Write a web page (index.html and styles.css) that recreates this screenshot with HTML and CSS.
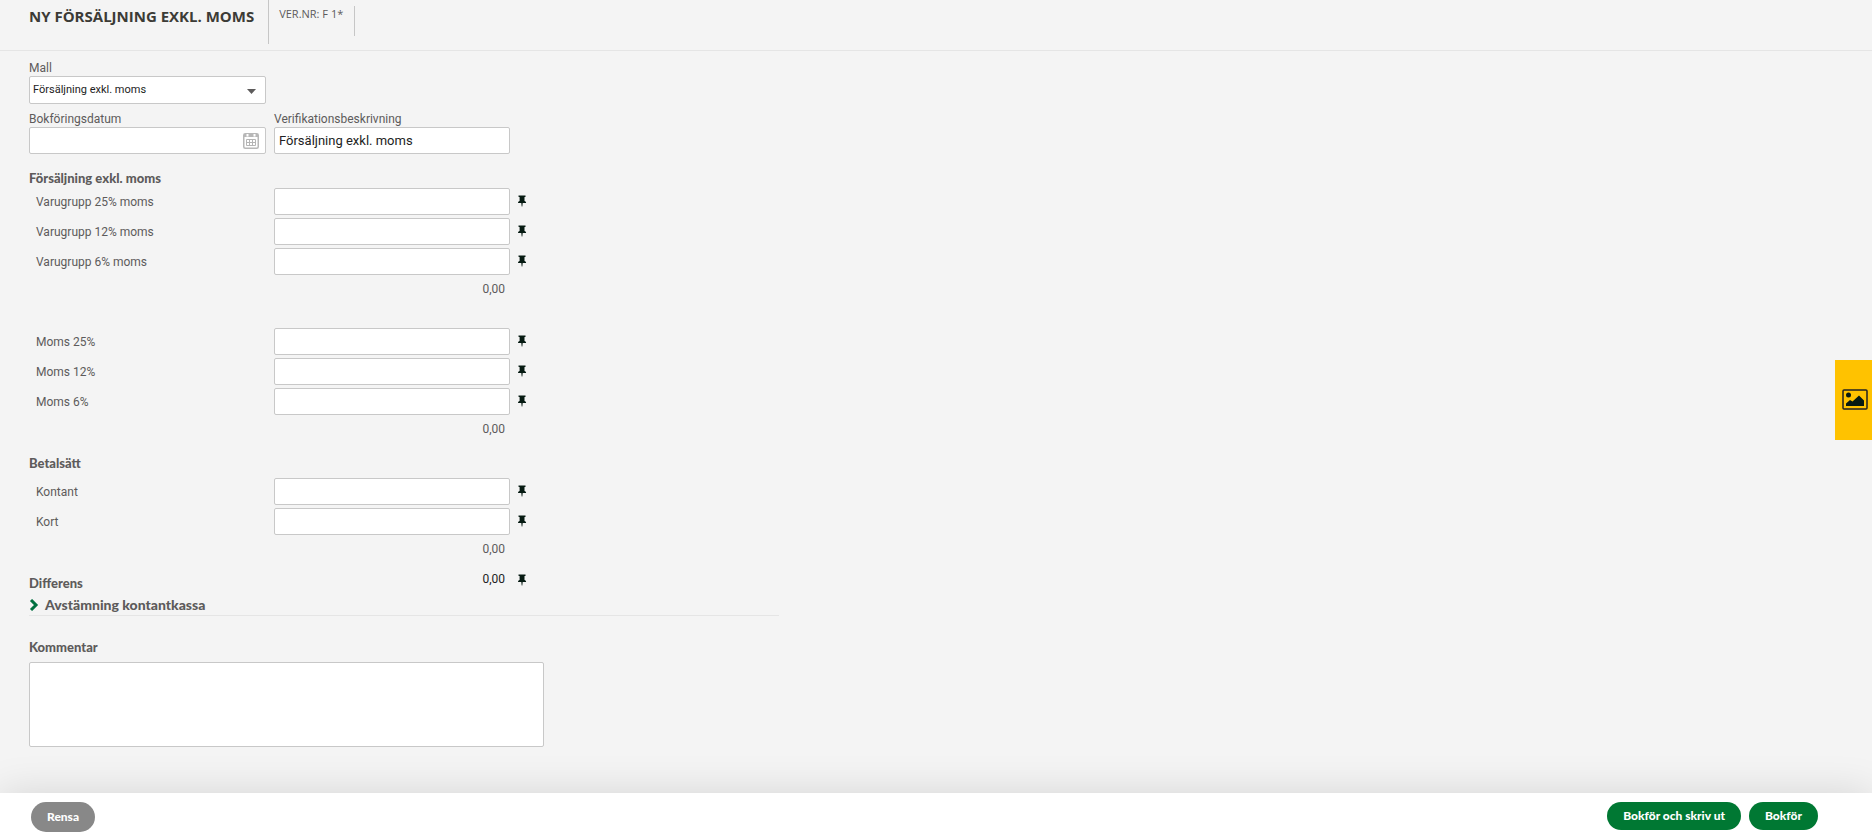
FILE: index.html
```html
<!DOCTYPE html>
<html lang="sv">
<head>
<meta charset="utf-8">
<title>Ny försäljning exkl. moms</title>
<link rel="stylesheet" href="styles.css">
</head>
<body>
<svg class="defs" aria-hidden="true">
  <symbol id="pin" viewBox="0 0 10 12"><path d="M1.500 0.500h7v1.500h-1v4c1 .3 1.600 1 1.600 2H5.700L5.300 11.500h-.6L4.300 8H1c0-1 .6-1.700 1.600-2V2h-1z"/></symbol>
</svg>
<header class="header">
  <h1 class="title">NY FÖRSÄLJNING EXKL. MOMS</h1>
  <p class="number">VER.NR: F 1*</p>
</header>
<form class="page">
  <main class="content">
    <div class="top">
      <div class="field">
        <label for="mall">Mall</label>
        <div class="wrap">
          <select id="mall" class="control select"><option>Försäljning exkl. moms</option></select>
          <svg class="arrow" viewBox="0 0 9 5" aria-hidden="true"><path d="M0 0h9L4.500 5z"/></svg>
        </div>
      </div>
      <div class="field date">
        <label for="datum">Bokföringsdatum</label>
        <div class="wrap">
          <input id="datum" class="control" type="text">
          <button class="calendar" type="button" aria-label="Välj datum">
            <svg viewBox="0 0 16 16" aria-hidden="true"><rect x="0.750" y="0.750" width="14.500" height="14.500" rx="1.500" fill="none" stroke="#b8b8b8" stroke-width="1.500"/><path d="M1 2.500h14" stroke="#b8b8b8" stroke-width="3"/><path d="M4.500 1v2.500M11.500 1v2.500" stroke="#fff" stroke-width="2"/><path d="M3.500 6.500h9v6h-9zM3.500 9.500h9M6.500 6.500v6M9.500 6.500v6" fill="none" stroke="#b5b5b5"/></svg>
          </button>
        </div>
      </div>
      <div class="field">
        <label for="beskrivning">Verifikationsbeskrivning</label>
        <input id="beskrivning" class="control" type="text" value="Försäljning exkl. moms">
      </div>
    </div>

    <section class="group">
      <h2 class="heading">Försäljning exkl. moms</h2>
      <div class="row"><label for="v25">Varugrupp 25% moms</label><input id="v25" class="control" type="text"><button class="pin" type="button" aria-label="Fäst"><svg><use href="#pin"/></svg></button></div>
      <div class="row"><label for="v12">Varugrupp 12% moms</label><input id="v12" class="control" type="text"><button class="pin" type="button" aria-label="Fäst"><svg><use href="#pin"/></svg></button></div>
      <div class="row"><label for="v6">Varugrupp 6% moms</label><input id="v6" class="control" type="text"><button class="pin" type="button" aria-label="Fäst"><svg><use href="#pin"/></svg></button></div>
      <div class="row total"><output class="sum">0,00</output></div>
    </section>

    <section class="group vat">
      <div class="row"><label for="m25">Moms 25%</label><input id="m25" class="control" type="text"><button class="pin" type="button" aria-label="Fäst"><svg><use href="#pin"/></svg></button></div>
      <div class="row"><label for="m12">Moms 12%</label><input id="m12" class="control" type="text"><button class="pin" type="button" aria-label="Fäst"><svg><use href="#pin"/></svg></button></div>
      <div class="row"><label for="m6">Moms 6%</label><input id="m6" class="control" type="text"><button class="pin" type="button" aria-label="Fäst"><svg><use href="#pin"/></svg></button></div>
      <div class="row total"><output class="sum">0,00</output></div>
    </section>

    <section class="group pay">
      <h2 class="heading">Betalsätt</h2>
      <div class="row"><label for="kontant">Kontant</label><input id="kontant" class="control" type="text"><button class="pin" type="button" aria-label="Fäst"><svg><use href="#pin"/></svg></button></div>
      <div class="row"><label for="kort">Kort</label><input id="kort" class="control" type="text"><button class="pin" type="button" aria-label="Fäst"><svg><use href="#pin"/></svg></button></div>
      <div class="row total"><output class="sum">0,00</output></div>
      <div class="row diff"><h2 class="heading">Differens</h2><output class="sum">0,00</output><button class="pin" type="button" aria-label="Fäst"><svg><use href="#pin"/></svg></button></div>
    </section>

    <button class="expander" type="button">
      <svg viewBox="0 0 10 12" aria-hidden="true"><path d="M2 1l5 5-5 5" fill="none" stroke="#007040" stroke-width="3"/></svg>
      Avstämning kontantkassa
    </button>

    <div class="comment">
      <label class="heading" for="kommentar">Kommentar</label>
      <textarea id="kommentar" class="control"></textarea>
    </div>
  </main>
  <footer class="footer">
    <button class="btn reset" type="reset">Rensa</button>
    <button class="btn" type="button">Bokför och skriv ut</button>
    <button class="btn" type="submit">Bokför</button>
  </footer>
</form>
<button class="images" type="button" aria-label="Visa bild">
  <svg viewBox="0 0 26 22" aria-hidden="true"><rect x="1" y="1" width="24" height="19" rx="1" fill="none" stroke="#222" stroke-width="1.500"/><circle cx="6.500" cy="6" r="2.500" fill="#061a12"/><path d="M4 17v-2.500l4-3.500 2.500 1.500L17 6.500l5 5V17z" fill="#061a12"/></svg>
</button>
</body>
</html>
```
FILE: styles.css
```css
* { box-sizing: border-box; }

body {
  display: flex;
  flex-direction: column;
  min-height: 100vh;
  margin: 0;
  background: #f4f4f4;
  color: #5d5b5b;
  font: 12px/16px Roboto, sans-serif;
}

button { padding: 0; border: 0; background: none; font: inherit; color: inherit; cursor: pointer; }

.defs { position: absolute; width: 0; height: 0; }

.header {
  display: flex;
  align-items: flex-start;
  height: 51px;
  padding-left: 29px;
  border-bottom: 1px solid #e5e5e5;
}
.title {
  height: 44px;
  margin: 0;
  padding: 6px 14px 0 0;
  border-right: 1px solid #c6c6c6;
  color: #3c3b36;
  font: 700 15px/20px "Open Sans", sans-serif;
}
.number {
  height: 30px;
  margin: 6px 0 0;
  padding: 0 11px 0 10px;
  border-right: 1px solid #c6c6c6;
  font: 11px/16px "Open Sans", sans-serif;
}

.page { display: flex; flex: 1; flex-direction: column; }
.content { flex: 1; padding: 9px 29px 46px; }

.top {
  display: grid;
  grid-template-columns: 237px 236px;
  gap: 7px 8px;
}
.field:first-child { grid-column: 1 / -1; width: 237px; }
.field label { display: block; height: 16px; }
.wrap { position: relative; }

.control {
  display: block;
  width: 100%;
  height: 27px;
  padding: 0 4px;
  border: 1px solid #c8c8c8;
  border-radius: 2px;
  background: #fff;
  color: #222;
  font: 13px/20px Roboto, sans-serif;
}
.select { height: 28px; padding: 0 3px; appearance: none; font-size: 11px; }
.arrow { position: absolute; top: 13px; right: 10px; width: 9px; height: 5px; fill: #5d5b5b; }
.calendar { position: absolute; top: 6px; right: 7px; width: 16px; height: 16px; }
.calendar svg { display: block; width: 16px; height: 16px; }

.heading { margin: 0; font: 900 13px/20px Lato, sans-serif; }

.group { display: grid; gap: 3px; margin-top: 14px; }
.group > .heading { margin-bottom: -3px; }
.row {
  display: grid;
  grid-template-columns: 245px 236px 22px;
  align-items: center;
  min-height: 27px;
}
.row label { padding-left: 7px; }
.total { min-height: 22px; }
.sum { grid-column: 2; padding-right: 5px; text-align: right; }
.pin { width: 10px; height: 14px; margin-left: 7px; padding-bottom: 2px; }
.pin svg { display: block; width: 10px; height: 12px; fill: #061a12; }

.vat { margin-top: 28px; }
.pay { margin-top: 13px; }
.pay > .heading { margin-bottom: 2px; }
.diff { min-height: 31px; }
.diff .heading { padding-top: 8px; }
.diff .sum { color: #222; }
.diff .pin { padding: 2px 0 0; }

.expander {
  display: flex;
  align-items: center;
  gap: 6px;
  width: 100%;
  max-width: 750px;
  height: 21px;
  margin-top: 1px;
  border-bottom: 1px solid #e5e5e5;
  font: 900 14px/18px Lato, sans-serif;
}
.expander svg { width: 10px; height: 12px; }

.comment { max-width: 515px; margin-top: 21px; }
.comment .heading { display: block; height: 25px; }
.comment .control { height: 85px; resize: none; }

.footer {
  display: flex;
  align-items: flex-start;
  gap: 8px;
  height: 47px;
  padding: 9px 54px 0 31px;
  background: #fff;
  box-shadow: 0 0 40px rgba(0, 0, 0, 0.13);
}
.btn {
  height: 28px;
  padding: 0 16px;
  border-radius: 15px;
  background: #007833;
  color: #fff;
  font: 900 12px/16px Lato, sans-serif;
}
.reset { height: 30px; margin-right: auto; background: #888; }

.images {
  position: fixed;
  top: 360px;
  right: 0;
  width: 37px;
  height: 80px;
  background: #ffc200;
}
.images svg { display: block; width: 26px; height: 22px; margin-left: 7px; }
```
